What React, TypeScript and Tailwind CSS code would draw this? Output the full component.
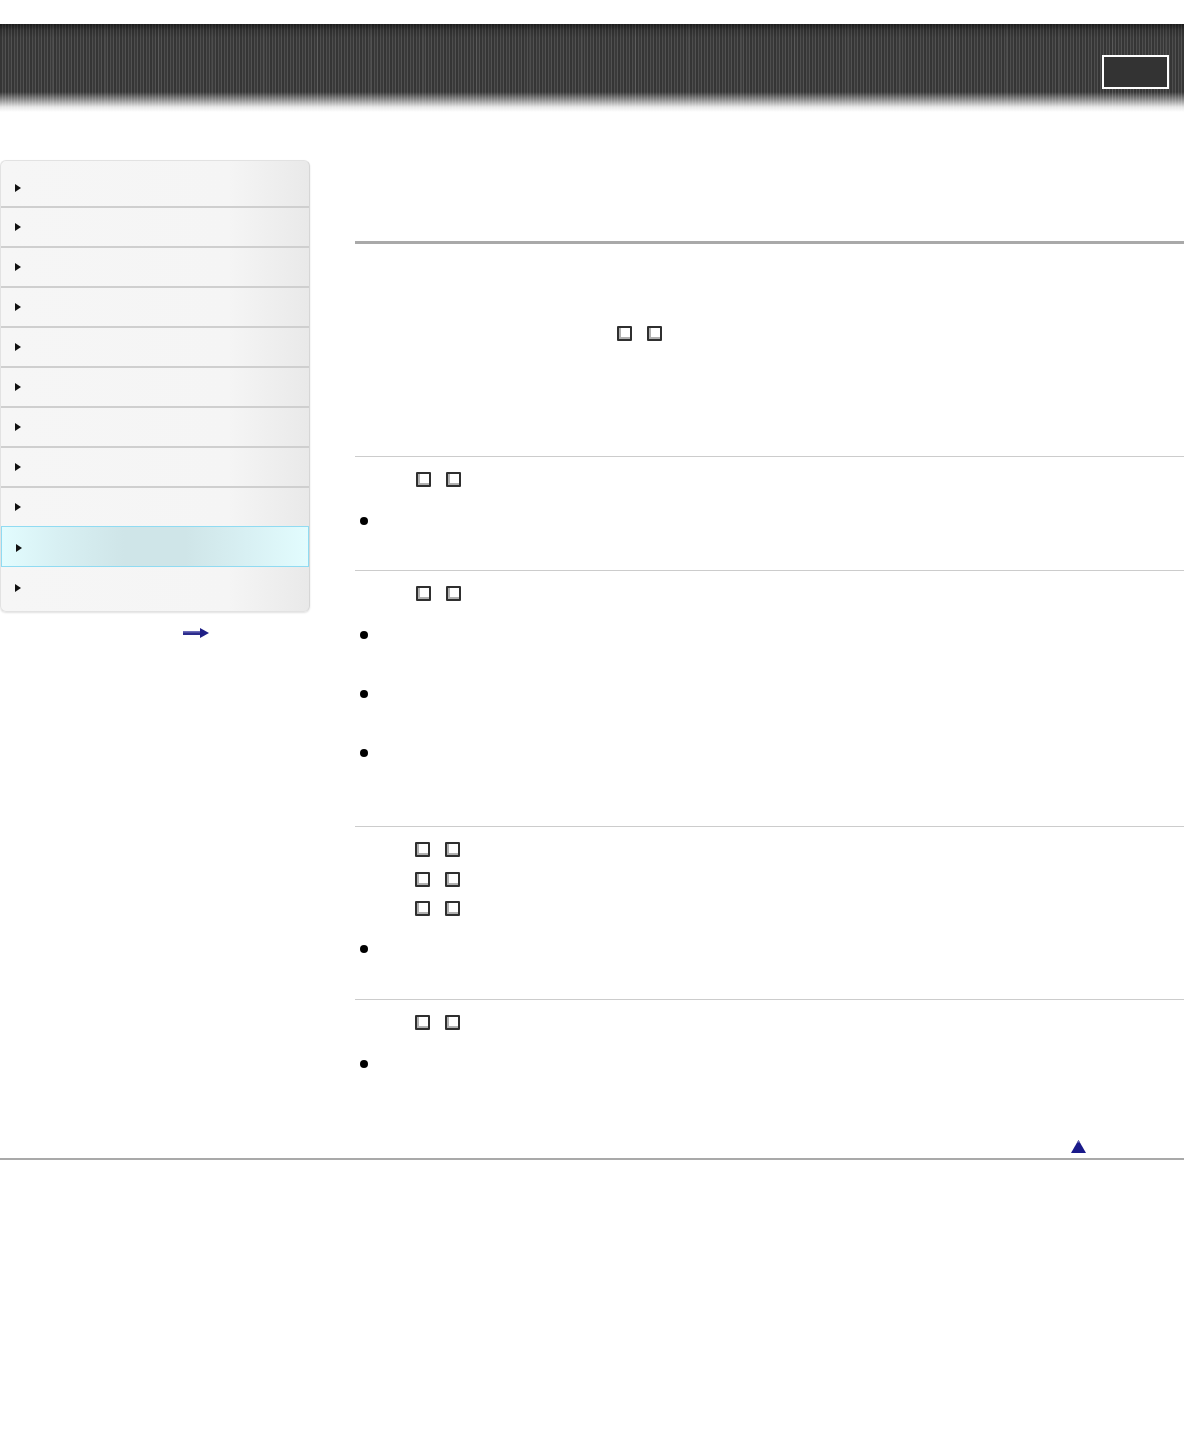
import React from "react";

const Box = () => (
  <span className="inline-block w-[15px] h-[15px] border-2 border-[#2f2f2f] bg-white shadow-[inset_2px_-2px_0_#b0b0b0] rounded-[1px]" />
);

const BoxPair = ({ className = "" }: { className?: string }) => (
  <div className={`flex gap-[15px] h-[15px] ${className}`}>
    <Box />
    <Box />
  </div>
);

const Bullet = ({ className = "" }: { className?: string }) => (
  <span className={`block w-[8px] h-[8px] rounded-full bg-black ml-[5px] ${className}`} />
);

const NavArrow = () => (
  <svg width="6" height="8" viewBox="0 0 6 8" className="block">
    <path d="M0 0 L6 4 L0 8 Z" fill="#111" />
  </svg>
);

function Sidebar() {
  const rows = Array.from({ length: 11 }, (_, i) => i);
  return (
    <div className="w-[310px] shrink-0">
      <div className="rounded-[6px] border border-[#e2e2e2] border-r-[#d6d6d6] bg-[linear-gradient(90deg,#f6f6f6_0%,#f5f5f5_74%,#e9e9e9_100%)] pt-[5px] pb-[4px] shadow-[0_1px_2px_rgba(0,0,0,0.12)] overflow-hidden">
        {rows.map((i) => {
          if (i === 9) {
            return (
              <div
                key={i}
                className="h-[41px] flex items-center pl-[14px] pt-[2px] border border-[#90dbf2] bg-[linear-gradient(90deg,#e2fcfe_0%,#d8f0f3_18%,#cfe5e8_40%,#cfe5e8_60%,#d8f0f3_80%,#e2fcfe_100%)]"
              >
                <NavArrow />
              </div>
            );
          }
          if (i === 10) {
            return (
              <div key={i} className="h-[40px] flex items-center pl-[14px] pt-[2px]">
                <NavArrow />
              </div>
            );
          }
          return (
            <div
              key={i}
              className={`h-[40px] flex items-center pl-[14px] ${
                i === 0 ? "pt-[4px]" : "border-t-2 border-[#cfcfcf]"
              }`}
            >
              <NavArrow />
            </div>
          );
        })}
      </div>
      <div className="flex justify-start pl-[183px] pt-[16px]">
        <svg width="26" height="10" viewBox="0 0 26 10" className="block">
          <rect x="0" y="3" width="18" height="4" fill="#2c2c8c" />
          <rect x="0" y="3" width="18" height="1.5" fill="#6a6ab8" />
          <path d="M17 0 L26 5 L17 10 Z" fill="#1f1f86" />
        </svg>
      </div>
    </div>
  );
}

function Main() {
  return (
    <div className="flex-1 ml-[45px]">
      <div className="h-[81px]" />
      <div className="h-[3px] bg-[#a9a9a9]" />
      {/* intro */}
      <div className="h-[212px] pt-[82px]">
        <BoxPair className="ml-[262px]" />
      </div>
      {/* section 1 */}
      <div className="border-t border-[#cccccc] h-[114px] pt-[15px]">
        <BoxPair className="ml-[61px]" />
        <Bullet className="mt-[30px]" />
      </div>
      {/* section 2 */}
      <div className="border-t border-[#cccccc] h-[256px] pt-[15px]">
        <BoxPair className="ml-[61px]" />
        <Bullet className="mt-[30px]" />
        <Bullet className="mt-[51px]" />
        <Bullet className="mt-[51px]" />
      </div>
      {/* section 3 */}
      <div className="border-t border-[#cccccc] h-[173px] pt-[15px]">
        <BoxPair className="ml-[60px]" />
        <BoxPair className="ml-[60px] mt-[15px]" />
        <BoxPair className="ml-[60px] mt-[14px]" />
        <Bullet className="mt-[29px]" />
      </div>
      {/* section 4 */}
      <div className="border-t border-[#cccccc] pt-[15px]">
        <BoxPair className="ml-[60px]" />
        <Bullet className="mt-[30px]" />
      </div>
      <div className="flex justify-end pr-[98px] mt-[72px] mb-[5px]">
        <svg width="15" height="13" viewBox="0 0 15 13" className="block">
          <path d="M7.5 0 L15 13 L0 13 Z" fill="#1a1a8a" />
          <path d="M7.5 0 L9 2.6 L6 2.6 Z" fill="#6f6fb8" />
        </svg>
      </div>
    </div>
  );
}

export default function App() {
  return (
    <div className="w-[1184px] min-h-[1440px] bg-white font-['Liberation_Sans',Arial,sans-serif]">
      <div className="h-[24px]" />
      <div className="h-[88px] bg-[linear-gradient(to_bottom,rgba(0,0,0,0.5)_0px,rgba(0,0,0,0.15)_6px,rgba(0,0,0,0)_14px,rgba(0,0,0,0)_68px,rgba(255,255,255,0.45)_76px,rgba(255,255,255,0.88)_83px,rgba(255,255,255,1)_88px),repeating-linear-gradient(90deg,rgba(255,255,255,0)_0px,rgba(255,255,255,0)_52px,rgba(255,255,255,0.07)_52px,rgba(255,255,255,0.07)_53px),repeating-linear-gradient(90deg,#353535_0px,#353535_2px,#4e4e4e_2px,#4e4e4e_3px,#3a3a3a_3px,#3a3a3a_5px,#525252_5px,#525252_6px)] flex justify-end pr-[15px] pt-[31px]">
        <div className="w-[67px] h-[34px] border-2 border-white bg-[#333333]" />
      </div>
      <div className="flex mt-[48px] items-start">
        <Sidebar />
        <Main />
      </div>
      <div className="h-[2px] bg-[#a9a9a9]" />
    </div>
  );
}
